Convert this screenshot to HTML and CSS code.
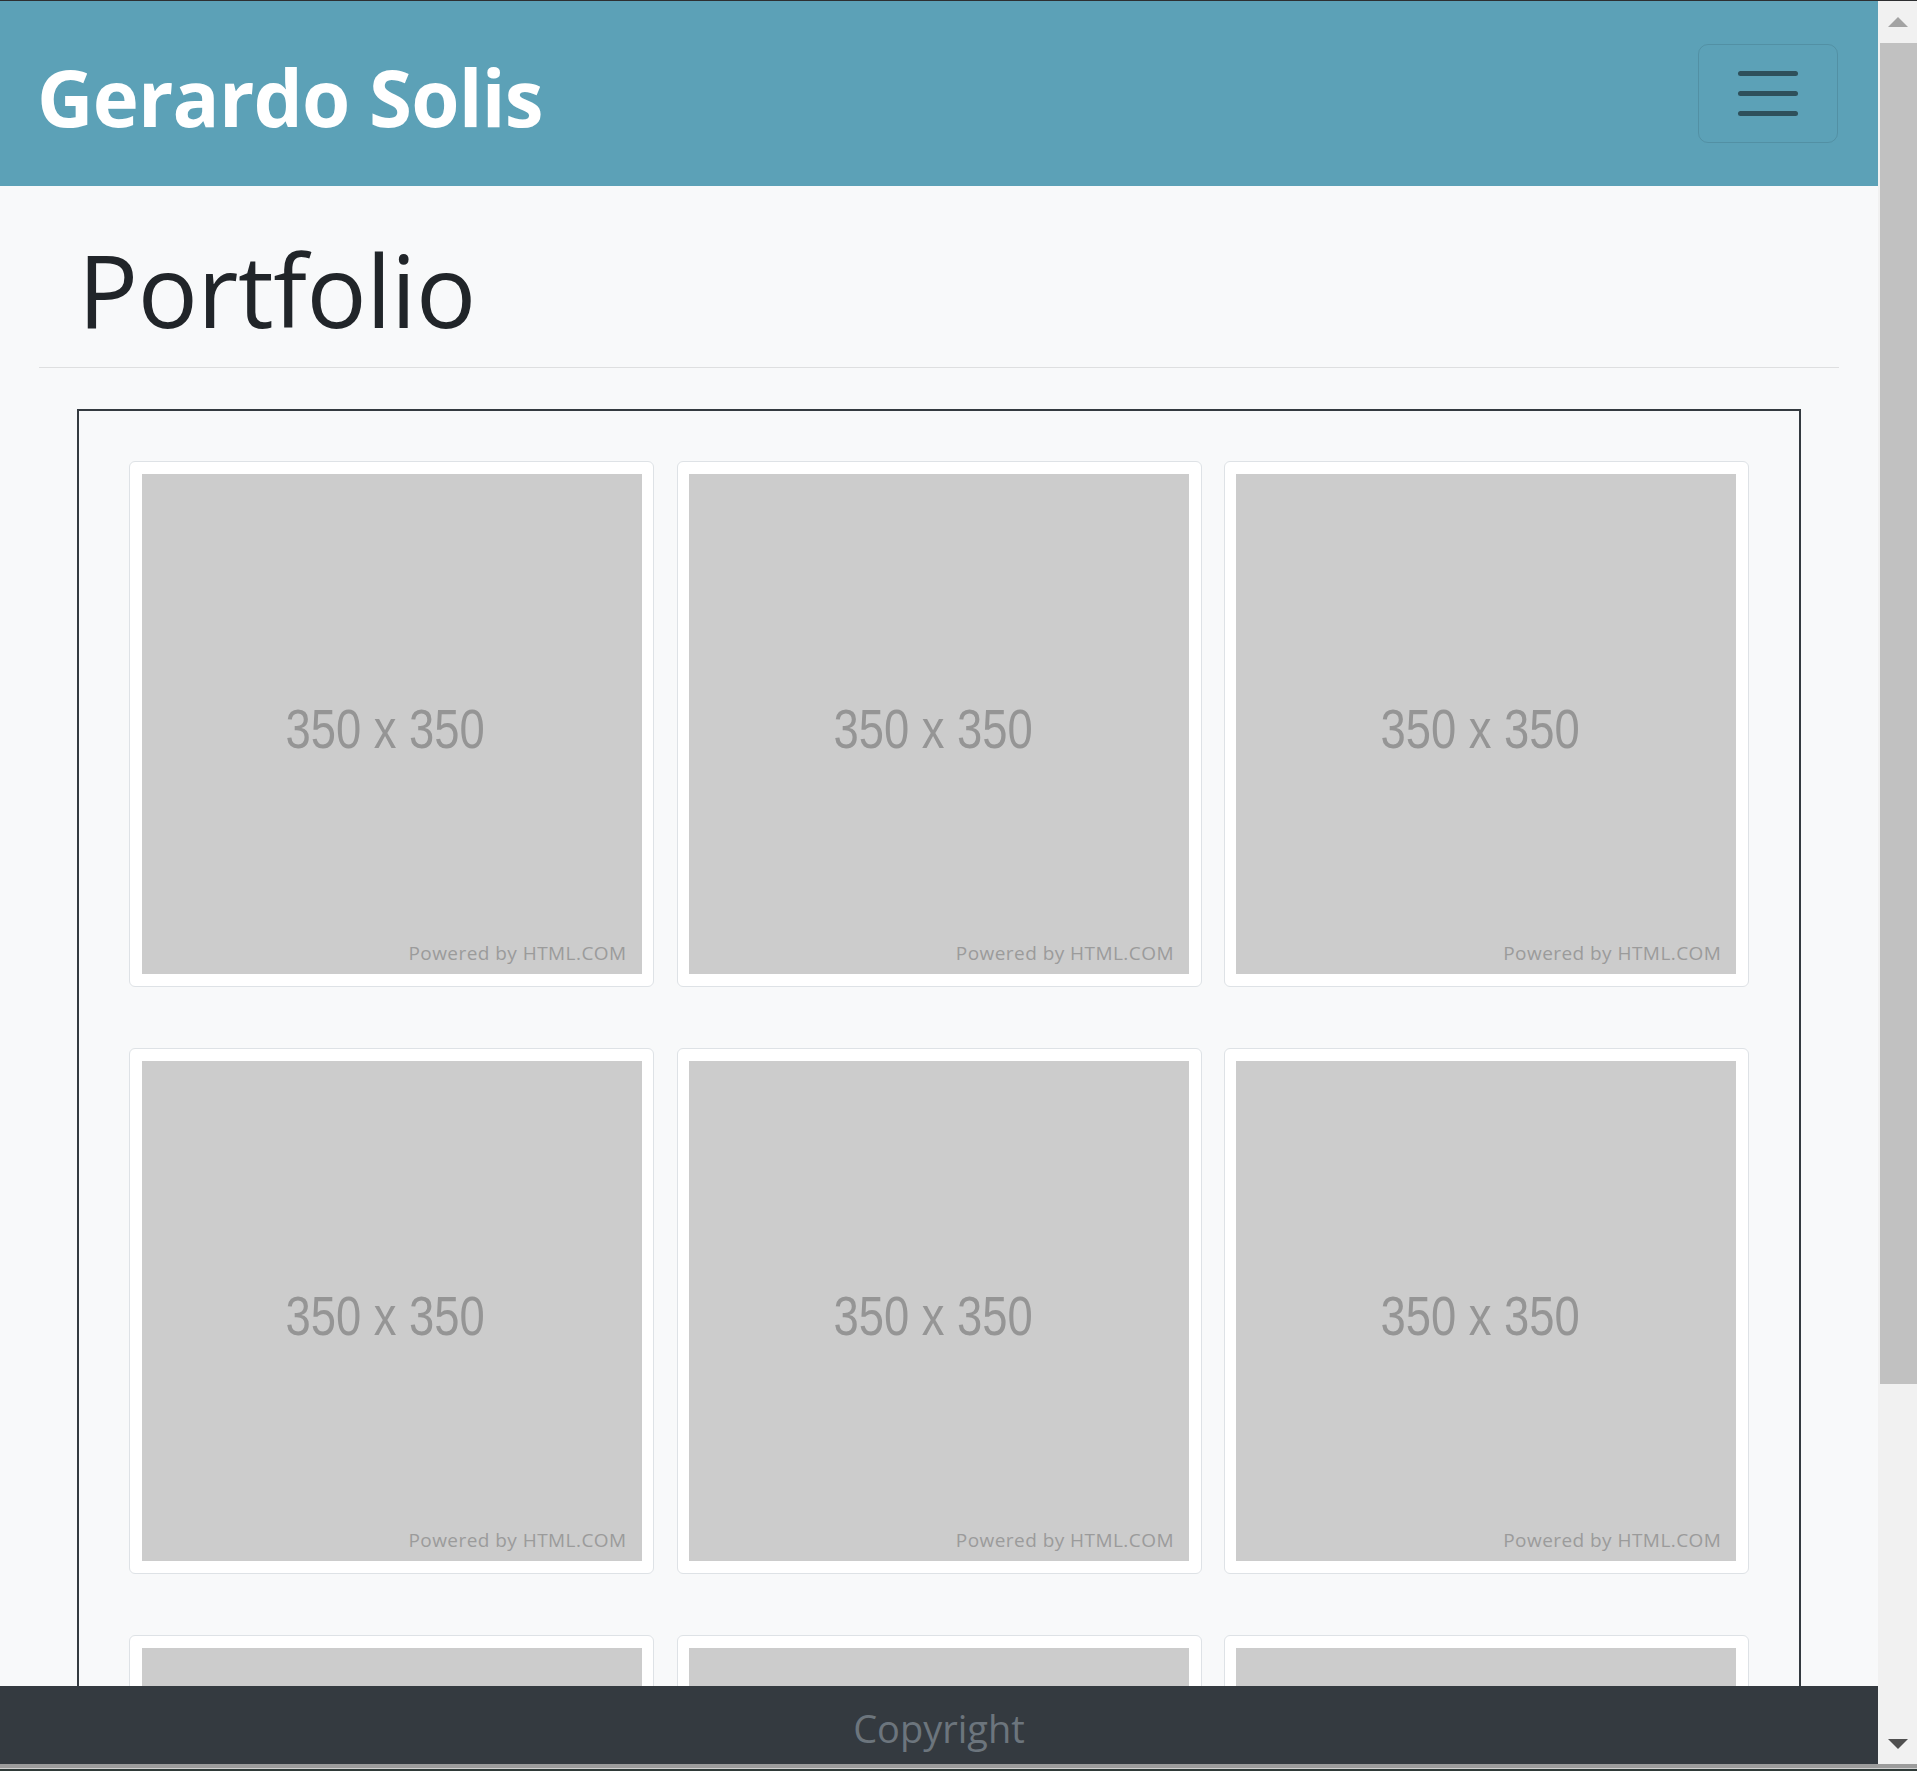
FILE: index.html
```html
<!DOCTYPE html>
<html lang="en">
<head>
<meta charset="utf-8">
<title>Gerardo Solis - Portfolio</title>
<link rel="stylesheet" href="styles.css">
</head>
<body>
<div class="window">
  <div class="topline"></div>
  <div class="frame">
    <div class="viewport">
      <nav class="navbar">
        <a class="brand" href="#">Gerardo Solis</a>
        <button class="toggler" type="button" aria-label="Toggle navigation">
          <span class="bar"></span>
          <span class="bar"></span>
          <span class="bar"></span>
        </button>
      </nav>
      <main class="content">
        <h1 class="page-title">Portfolio</h1>
        <hr class="divider">
        <section class="gallery">
          <div class="grid">
            <div class="card"><div class="ph"><span class="ph-size">350 x 350</span><span class="ph-credit">Powered by HTML.COM</span></div></div>
            <div class="card"><div class="ph"><span class="ph-size">350 x 350</span><span class="ph-credit">Powered by HTML.COM</span></div></div>
            <div class="card"><div class="ph"><span class="ph-size">350 x 350</span><span class="ph-credit">Powered by HTML.COM</span></div></div>
            <div class="card"><div class="ph"><span class="ph-size">350 x 350</span><span class="ph-credit">Powered by HTML.COM</span></div></div>
            <div class="card"><div class="ph"><span class="ph-size">350 x 350</span><span class="ph-credit">Powered by HTML.COM</span></div></div>
            <div class="card"><div class="ph"><span class="ph-size">350 x 350</span><span class="ph-credit">Powered by HTML.COM</span></div></div>
            <div class="card"><div class="ph"></div></div>
            <div class="card"><div class="ph"></div></div>
            <div class="card"><div class="ph"></div></div>
          </div>
        </section>
      </main>
      <footer class="footer">Copyright</footer>
    </div>
    <div class="scrollbar">
      <div class="sb-btn"><span class="arrow-up"></span></div>
      <div class="sb-thumb"></div>
      <div class="sb-track"></div>
      <div class="sb-btn sb-btn-down"><span class="arrow-down"></span></div>
    </div>
  </div>
  <div class="bottomline"></div>
</div>
</body>
</html>
```
FILE: styles.css
```css
html, body {
  margin: 0;
  padding: 0;
}

body {
  width: 1917px;
  height: 1771px;
  overflow: hidden;
  background: #f8f9fa;
  font-family: "Open Sans", "Noto Sans", sans-serif;
}

.window {
  display: flex;
  flex-direction: column;
  height: 1771px;
}

.topline {
  flex: none;
  height: 1px;
  background: #2d2f31;
}

.frame {
  flex: none;
  display: flex;
  height: 1763px;
}

.viewport {
  position: relative;
  flex: 1;
  overflow: hidden;
  background: #f8f9fa;
}

/* navbar */
.navbar {
  height: 185px;
  box-sizing: border-box;
  display: flex;
  align-items: center;
  justify-content: space-between;
  padding: 0 40px 0 37px;
  background: #5ca1b7;
}

.brand {
  margin-top: 7px;
  font-family: "Open Sans", "Noto Sans", sans-serif;
  font-weight: 700;
  font-size: 78px;
  line-height: 78px;
  color: #ffffff;
  text-decoration: none;
  letter-spacing: -0.8px;
}

.toggler {
  width: 140px;
  height: 99px;
  box-sizing: border-box;
  padding: 0;
  border: 1.5px solid rgba(0, 0, 0, 0.1);
  border-radius: 10px;
  background: transparent;
  display: flex;
  flex-direction: column;
  align-items: center;
  justify-content: center;
  gap: 15px;
}

.bar {
  display: block;
  width: 60px;
  height: 5px;
  border-radius: 2.5px;
  background: rgba(0, 0, 0, 0.5);
}

/* content */
.content {
  padding: 0 39px;
}

.page-title {
  margin: 43px 0 0;
  padding-left: 39px;
  font-family: "Open Sans", "Noto Sans", sans-serif;
  font-weight: 400;
  font-size: 100px;
  line-height: 120px;
  color: #212529;
  letter-spacing: -0.4px;
}

.divider {
  margin: 18px 0 0;
  border: 0;
  border-top: 1px solid rgba(0, 0, 0, 0.1);
  height: 0;
}

.gallery {
  margin: 41px 38px 0;
  border: 2px solid #343a40;
  padding: 50px 0;
}

.grid {
  display: grid;
  grid-template-columns: repeat(3, 525px);
  column-gap: 22.4px;
  row-gap: 61px;
  justify-content: center;
}

.card {
  box-sizing: border-box;
  width: 525px;
  height: 526px;
  padding: 12px 11.5px;
  border: 1px solid #dee2e6;
  border-radius: 6px;
  background: #ffffff;
}

.ph {
  position: relative;
  width: 500px;
  height: 500px;
  background: #cccccc;
  display: flex;
  align-items: center;
  justify-content: center;
}

.ph-size {
  display: block;
  padding: 9px 15px 0 0;
  font-family: "Liberation Sans", Arial, sans-serif;
  font-size: 55px;
  color: #959595;
  white-space: nowrap;
  transform: scaleX(0.825);
}

.ph-credit {
  position: absolute;
  right: 15px;
  bottom: 11px;
  font-family: "Open Sans", "Noto Sans", sans-serif;
  font-size: 19px;
  line-height: 19px;
  letter-spacing: 0.45px;
  color: #9b9b9b;
  white-space: nowrap;
}

/* footer (fixed to the bottom of the viewport, over the content) */
.footer {
  position: absolute;
  left: 0;
  right: 0;
  bottom: 0;
  height: 78px;
  box-sizing: border-box;
  padding-top: 6px;
  display: flex;
  align-items: center;
  justify-content: center;
  background: #343a40;
  color: #6c757d;
  font-family: "Open Sans", "Noto Sans", sans-serif;
  font-size: 38px;
}

/* scrollbar */
.scrollbar {
  flex: none;
  width: 39px;
  display: flex;
  flex-direction: column;
  background: #f1f1f1;
}

.sb-btn {
  flex: none;
  height: 42px;
  display: flex;
  align-items: center;
  justify-content: center;
}

.sb-btn-down {
  height: 40px;
}

.arrow-up {
  width: 0;
  height: 0;
  border-left: 10px solid transparent;
  border-right: 10px solid transparent;
  border-bottom: 10px solid #a3a3a3;
}

.arrow-down {
  width: 0;
  height: 0;
  border-left: 10px solid transparent;
  border-right: 10px solid transparent;
  border-top: 10px solid #505050;
}

.sb-thumb {
  flex: none;
  height: 1341px;
  margin-left: 2px;
  background: #c1c1c1;
}

.sb-track {
  flex: 1;
}

.bottomline {
  flex: 1;
  background: linear-gradient(to bottom, #9c9c9c 0, #9c9c9c 4px, #d0d0d0 4px, #d0d0d0 5px, #2f3a38 5px);
}
```
